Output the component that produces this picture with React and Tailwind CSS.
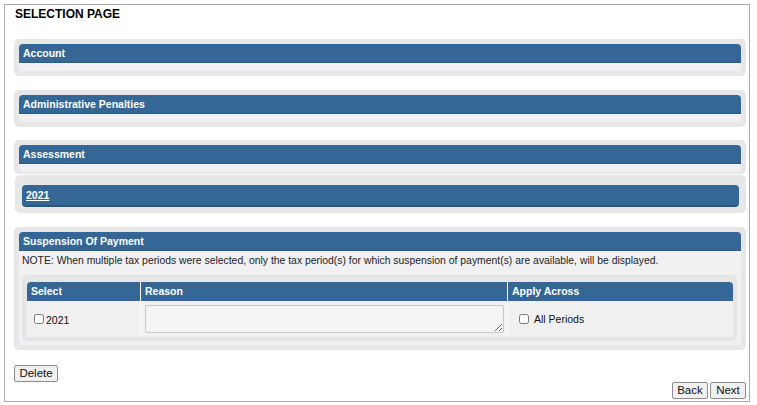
import React from 'react';

const BLUE = 'bg-[#346796]';

function Panel({ title, className }) {
  return (
    <div className={`rounded-[5px] bg-[#e7e7e8] p-[5px] ${className}`}>
      <div className="rounded-[4px] bg-[#f1f1f3]">
        <div className={`h-[19px] rounded-t-[4px] ${BLUE} border-b border-[#2d5b86] pl-[4px] text-[10.5px] leading-[18px] font-bold text-white`}>
          {title}
        </div>
        <div className="h-[8px]" />
      </div>
    </div>
  );
}

function Btn({ children, className }) {
  return (
    <button
      className={`block h-[17px] rounded-[2px] border border-[#8c8c8c] bg-[#f0f0f0] text-[11.5px] leading-[15px] text-[#111] ${className}`}
    >
      {children}
    </button>
  );
}

export default function App() {
  return (
    <div className="ml-[4px] mt-[4px] flex h-[398px] w-[746px] flex-col border border-[#ababab] pl-[9px] pr-[3px] font-['Liberation_Sans',Arial,sans-serif]">
      {/* Title */}
      <div className="pl-[1px] pt-[2px] text-[12px] font-bold leading-[14px] text-black">SELECTION PAGE</div>

      <Panel title="Account" className="mt-[18px]" />
      <Panel title="Administrative Penalties" className="mt-[14px]" />

      {/* Assessment + year */}
      <div className="mt-[13px] rounded-[5px] bg-[#e7e7e8] px-[5px] pb-[2px] pt-[5px]">
        <div className="rounded-[4px] bg-[#f1f1f3]">
          <div className={`h-[19px] rounded-t-[4px] ${BLUE} border-b border-[#2d5b86] pl-[4px] text-[10.5px] font-bold leading-[18px] text-white`}>
            Assessment
          </div>
          <div className="h-[8px]" />
        </div>
      </div>
      <div className="ml-[1px] mt-[1px] rounded-[5px] bg-[#e7e7e8] pb-[6px] pl-[7px] pr-[7px] pt-[10px]">
        <div className={`h-[22px] rounded-[4px] ${BLUE} border-b-2 border-[#2a557d] pl-[4px] text-[10.5px] font-bold leading-[21px] text-white`}>
          <span className="underline">2021</span>
        </div>
      </div>

      {/* Suspension of payment */}
      <div className="mt-[14px] rounded-[5px] bg-[#e7e7e8] p-[5px]">
        <div className="rounded-[4px] bg-[#f1f1f3] pb-[4px]">
          <div className={`h-[19px] rounded-t-[4px] ${BLUE} border-b border-[#2d5b86] pl-[4px] text-[10.5px] font-bold leading-[18px] text-white`}>
            Suspension Of Payment
          </div>
          <div className="h-[20px] pl-[3px] text-[10.4px] leading-[20px] text-[#222]">
            NOTE: When multiple tax periods were selected, only the tax period(s) for which suspension of payment(s) are available, will be displayed.
          </div>
          <div className="ml-[3px] mr-[4px] mt-[4px] rounded-[5px] bg-[#e5e5e6] pb-[4px] pl-[5px] pr-[4px] pt-[7px]">
            <div className={`grid h-[19px] grid-cols-[113px_367px_225px] rounded-t-[4px] ${BLUE} text-[10.5px] font-bold leading-[19px] text-white`}>
              <div className="pl-[4px]">Select</div>
              <div className="border-l border-white pl-[4px]">Reason</div>
              <div className="border-l border-white pl-[4px]">Apply Across</div>
            </div>
            <div className="grid h-[36px] grid-cols-[113px_367px_225px] bg-[#f0f0f0] text-[10.5px] text-[#111]">
              <div className="flex items-center gap-[2px] pl-[7px]">
                <input type="checkbox" className="m-0 h-[10px] w-[10px]" />
                <span className="pt-[3px]">2021</span>
              </div>
              <div className="border-l border-[#fafafa] pl-[4px] pt-[4px]">
                <textarea className="block h-[28px] w-[359px] rounded-[2px] border border-[#c9c9c9] bg-[#f4f4f4]" />
              </div>
              <div className="flex items-center gap-[5px] border-l border-[#fafafa] pl-[11px]">
                <input type="checkbox" className="m-0 h-[10px] w-[10px]" />
                <span className="pt-[2px]">All Periods</span>
              </div>
            </div>
          </div>
        </div>
      </div>

      <div className="mt-[15px] flex">
        <Btn className="w-[44px]">Delete</Btn>
      </div>
      <div className="flex justify-end gap-[2px]">
        <Btn className="w-[36px]">Back</Btn>
        <Btn className="w-[36px]">Next</Btn>
      </div>
    </div>
  );
}
